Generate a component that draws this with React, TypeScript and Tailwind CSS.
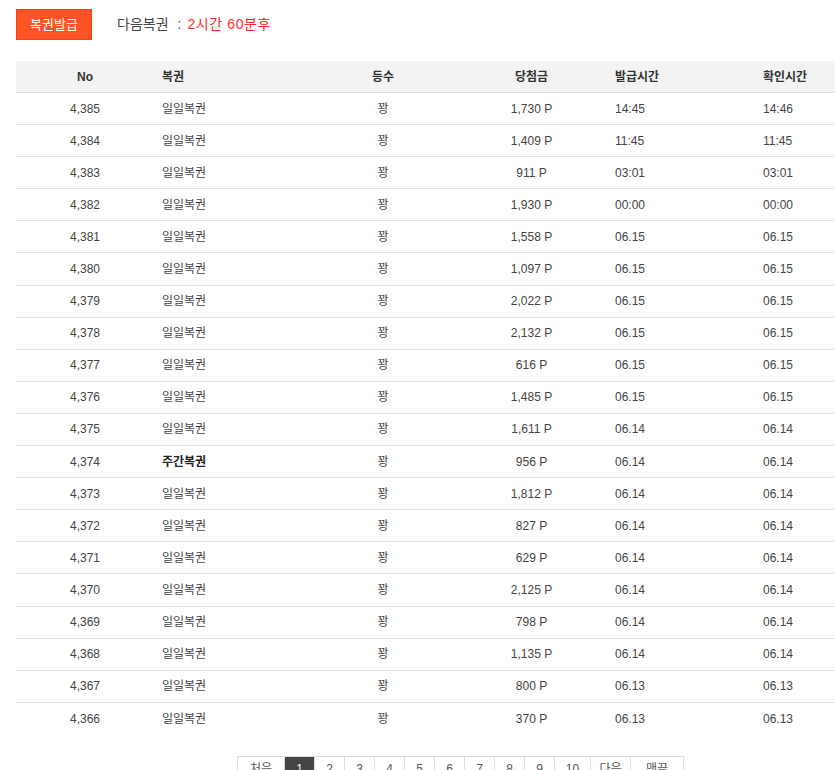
const rows: [string, string, string, string, string][] = [
  ['4,385', '일일복권', '1,730 P', '14:45', '14:46'],
  ['4,384', '일일복권', '1,409 P', '11:45', '11:45'],
  ['4,383', '일일복권', '911 P', '03:01', '03:01'],
  ['4,382', '일일복권', '1,930 P', '00:00', '00:00'],
  ['4,381', '일일복권', '1,558 P', '06.15', '06.15'],
  ['4,380', '일일복권', '1,097 P', '06.15', '06.15'],
  ['4,379', '일일복권', '2,022 P', '06.15', '06.15'],
  ['4,378', '일일복권', '2,132 P', '06.15', '06.15'],
  ['4,377', '일일복권', '616 P', '06.15', '06.15'],
  ['4,376', '일일복권', '1,485 P', '06.15', '06.15'],
  ['4,375', '일일복권', '1,611 P', '06.14', '06.14'],
  ['4,374', '주간복권', '956 P', '06.14', '06.14'],
  ['4,373', '일일복권', '1,812 P', '06.14', '06.14'],
  ['4,372', '일일복권', '827 P', '06.14', '06.14'],
  ['4,371', '일일복권', '629 P', '06.14', '06.14'],
  ['4,370', '일일복권', '2,125 P', '06.14', '06.14'],
  ['4,369', '일일복권', '798 P', '06.14', '06.14'],
  ['4,368', '일일복권', '1,135 P', '06.14', '06.14'],
  ['4,367', '일일복권', '800 P', '06.13', '06.13'],
  ['4,366', '일일복권', '370 P', '06.13', '06.13'],
];

const pages: [string, string][] = [
  ['처음', 'w-[47px]'],
  ['1', 'w-[30px]'],
  ['2', 'w-[30px]'],
  ['3', 'w-[30px]'],
  ['4', 'w-[30px]'],
  ['5', 'w-[30px]'],
  ['6', 'w-[30px]'],
  ['7', 'w-[30px]'],
  ['8', 'w-[30px]'],
  ['9', 'w-[30px]'],
  ['10', 'w-[36px]'],
  ['다음', 'w-[40px]'],
  ['맨끝', 'w-[53px]'],
];

const cols = 'grid grid-cols-[138px_156px_146px_151px_148px_80px]';

export default function App() {
  return (
    <div
      className="w-[835px] h-[770px] overflow-hidden bg-white pl-4 pt-[9px] text-[#444]"
      style={{ fontFamily: '"Liberation Sans", "Noto Sans CJK KR", sans-serif' }}
    >
      <div className="flex items-center">
        <button className="h-[31px] w-[76px] bg-[#ff5324] border border-[#e8461c] text-white text-[13px]">
          복권발급
        </button>
        <div className="ml-[25px] flex items-center text-[14px] text-[#444]">
          <span>다음복권</span>
          <span className="ml-[9px]">:</span>
          <span className="ml-[6px] text-[#ff2a2a] tracking-[0.6px]">2시간 60분후</span>
        </div>
      </div>

      <div className="mt-[21px] w-[819px] text-[12px]">
        <div className={`${cols} h-8 items-center bg-[#f3f3f3] border-b border-[#dcdcdc] font-bold text-[#333]`}>
          <div className="text-center">No</div>
          <div className="pl-2">복권</div>
          <div className="text-center">등수</div>
          <div className="text-center">당첨금</div>
          <div className="pl-2">발급시간</div>
          <div className="pl-2">확인시간</div>
        </div>
        {rows.map((r, i) => (
          <div
            key={r[0]}
            className={`${cols} h-[32.1px] items-center ${i < rows.length - 1 ? 'border-b border-[#e3e3e3]' : ''}`}
          >
            <div className="text-center">{r[0]}</div>
            <div className={`pl-2 ${r[1] === '주간복권' ? 'font-bold text-[#222]' : ''}`}>{r[1]}</div>
            <div className="text-center">꽝</div>
            <div className="text-center">{r[2]}</div>
            <div className="pl-2">{r[3]}</div>
            <div className="pl-2">{r[4]}</div>
          </div>
        ))}
      </div>

      <div className="mt-[21px] ml-[221px] flex">
        <div className="flex border-l border-t border-[#ddd] text-[12px] text-[#555]">
          {pages.map(([p, w]) => (
            <div
              key={p}
              className={`h-[30px] pb-1 flex items-center justify-center border-r border-b border-[#ddd] ${w} ${
                p === '1' ? 'bg-[#444] text-white border-[#444]' : ''
              }`}
            >
              {p}
            </div>
          ))}
        </div>
      </div>
    </div>
  );
}
